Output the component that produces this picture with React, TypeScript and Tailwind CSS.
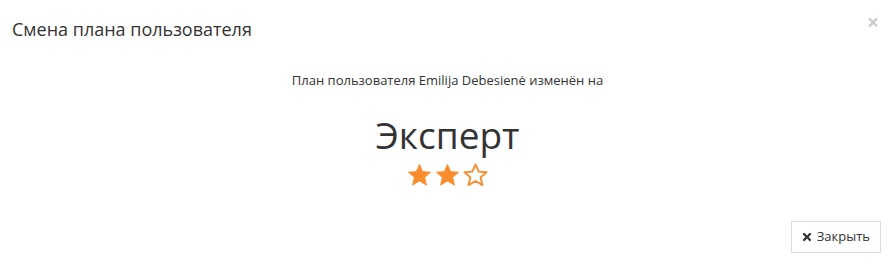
import React from "react";
import { FaTimes } from "react-icons/fa";

const Star = ({ filled }: { filled: boolean }) => (
  <svg width="25" height="24" viewBox="0 0 26 25" className="block">
    <polygon
      points="13,1.5 16.3,9 24.5,9.6 18.3,15 20.2,23 13,18.7 5.8,23 7.7,15 1.5,9.6 9.7,9"
      fill={filled ? "#f98d2e" : "none"}
      stroke="#f98d2e"
      strokeWidth={filled ? 1 : 2}
      strokeLinejoin="round"
    />
  </svg>
);

export default function App() {
  return (
    <div className="w-[895px] h-[266px] bg-white text-[#333] flex flex-col" style={{ fontFamily: '"Open Sans", sans-serif' }}>
      <div className="flex items-start justify-between px-[12px] pt-[15px] h-[53px]">
        <h4 className="text-[18px] leading-[28px] m-0 font-normal">Смена плана пользователя</h4>
        <button className="text-[21px] font-bold leading-none text-black opacity-20 mr-[4px] mt-[-3px]">×</button>
      </div>
      <div className="flex flex-col items-center">
        <p className="text-[13px] leading-[18px] mt-[18px]">План пользователя Emilija Debesienė изменён на</p>
        <h2 className="text-[37px] leading-[40px] mt-[26px] font-normal">Эксперт</h2>
        <div className="flex gap-[3px] mt-[8px] ml-[-1px]">
          <Star filled />
          <Star filled />
          <Star filled={false} />
        </div>
      </div>
      <div className="flex justify-end pr-[14px] mt-[34px]">
        <button className="flex items-center gap-[4px] border border-[#ddd] h-[32px] pl-[9px] pr-[10px] text-[13px] text-[#333] bg-white">
          <FaTimes className="text-[12px]" />
          Закрыть
        </button>
      </div>
    </div>
  );
}
